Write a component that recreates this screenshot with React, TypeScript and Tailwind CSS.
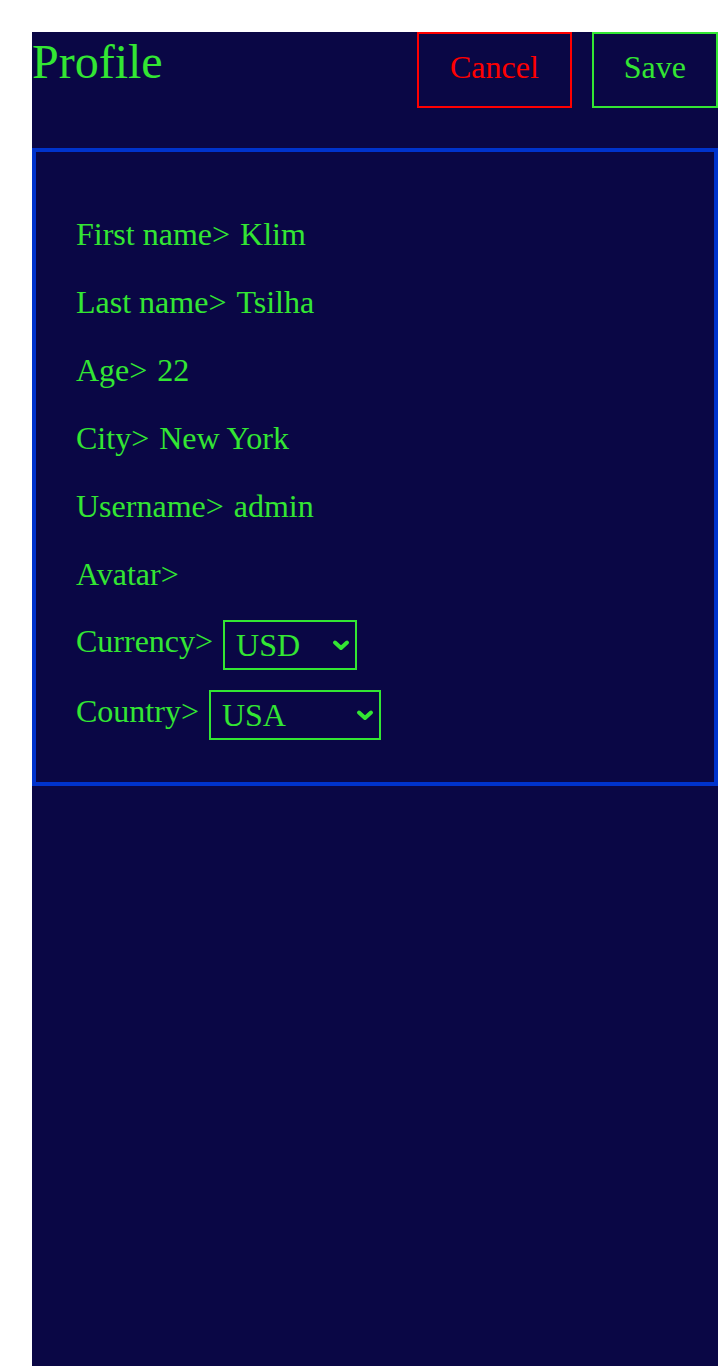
const fields = [
  { label: 'First name>', value: 'Klim' },
  { label: 'Last name>', value: 'Tsilha' },
  { label: 'Age>', value: '22' },
  { label: 'City>', value: 'New York' },
  { label: 'Username>', value: 'admin' },
  { label: 'Avatar>', value: '' },
];

const Chevron = () => (
  <svg
    className="pointer-events-none absolute right-[7px] top-1/2 -translate-y-1/2"
    width="18"
    height="12"
    viewBox="0 0 18 12"
    fill="none"
  >
    <path d="M3 3.5 L9 9 L15 3.5" stroke="#33e633" strokeWidth="4" strokeLinecap="round" strokeLinejoin="round" />
  </svg>
);

const Select = ({ options, width }: { options: string[]; width: string }) => (
  <span className="relative ml-[2px] inline-block align-[-4px]">
    <select
      className={`${width} h-[50px] appearance-none border-2 border-[#33e633] bg-[#0a0745] pl-[11px] text-[32px] text-[#33e633] outline-none`}
      style={{ fontFamily: '"Liberation Serif", serif' }}
      defaultValue={options[0]}
    >
      {options.map((o) => (
        <option key={o}>{o}</option>
      ))}
    </select>
    <Chevron />
  </span>
);

export default function App() {
  return (
    <div className="min-h-screen bg-white pl-8 pt-8" style={{ fontFamily: '"Liberation Serif", "Times New Roman", serif' }}>
      <div className="min-h-[1334px] bg-[#0a0745]">
        <div className="mb-10 flex items-start justify-between">
          <h1 className="text-[48px] leading-[60px] text-[#33e633]">Profile</h1>
          <div className="flex gap-5">
            <button className="h-[76px] border-2 border-[#ff0000] px-[31px] pb-[6px] text-[32px] leading-[36px] text-[#ff0000]">Cancel</button>
            <button className="h-[76px] border-2 border-[#33e633] px-[30px] pb-[6px] text-[32px] leading-[36px] text-[#33e633]">Save</button>
          </div>
        </div>
        <div className="border-4 border-[#0033cc] px-10 pb-[42px] pt-16 text-[32px] text-[#33e633]">
          <div className="flex flex-col gap-8 leading-[36px]">
            {fields.map((f) => (
              <div key={f.label}>
                {f.label}
                {f.value && <span className="ml-[10px]">{f.value}</span>}
              </div>
            ))}
          </div>
          <div className="mt-[28px] leading-[36px]">
            {'Currency>'} <Select options={['USD', 'EUR', 'UAH']} width="w-[134px]" />
          </div>
          <div className="mt-[20px] leading-[36px]">
            {'Country>'} <Select options={['USA', 'Ukraine', 'Germany']} width="w-[172px]" />
          </div>
        </div>
      </div>
    </div>
  );
}
